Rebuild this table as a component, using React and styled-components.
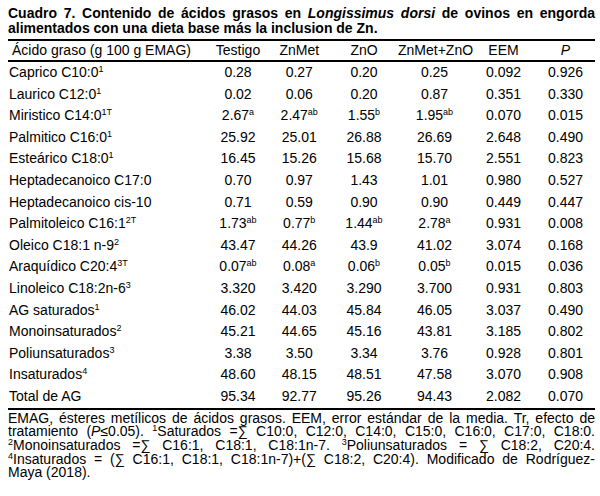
import React from 'react';
import styled, { createGlobalStyle } from 'styled-components';

const GlobalStyle = createGlobalStyle`
  body {
    margin: 0;
    background: #ffffff;
    color: #000000;
    font-family: "Liberation Sans", Arial, sans-serif;
  }
`;

const Page = styled.div`
  width: 587px;
  padding: 6px 5px 0 8px;
`;

const Title = styled.div`
  font-size: 14px;
  font-weight: bold;
  line-height: 15px;
`;

const Line = styled.div`
  text-align: ${(p) => (p.$last ? 'left' : 'justify')};
  text-align-last: ${(p) => (p.$last ? 'left' : 'justify')};
`;

const Table = styled.div`
  margin-top: 3px;
  border-top: 2px solid #000;
  border-bottom: 2px solid #000;
  font-size: 14px;
`;

const cols = '199.5px 61px 61.5px 68px 73px 65px 59px';

const HeadRow = styled.div`
  display: grid;
  grid-template-columns: ${cols};
  height: 19px;
  line-height: 19px;
  border-bottom: 2px solid #000;
`;

const Row = styled.div`
  display: grid;
  grid-template-columns: ${cols};
  height: 21.6px;
  line-height: 21.6px;
`;

const Label = styled.div`
  padding-left: ${(p) => (p.$head ? '4px' : '1px')};
  white-space: nowrap;
`;

const Cell = styled.div`
  text-align: center;
  white-space: nowrap;
  font-style: ${(p) => (p.$italic ? 'italic' : 'normal')};
`;

const Sup = styled.sup`
  font-size: 9px;
  line-height: 0;
  vertical-align: 5px;
`;

const Notes = styled.div`
  margin-top: 2px;
  font-size: 14px;
  line-height: 13.7px;
`;

const rows = [
  ['Caprico C10:0', '1', ['0.28'], ['0.27'], ['0.20'], ['0.25'], '0.092', '0.926'],
  ['Laurico C12:0', '1', ['0.02'], ['0.06'], ['0.20'], ['0.87'], '0.351', '0.330'],
  ['Miristico C14:0', '1T', ['2.67', 'a'], ['2.47', 'ab'], ['1.55', 'b'], ['1.95', 'ab'], '0.070', '0.015'],
  ['Palmitico C16:0', '1', ['25.92'], ['25.01'], ['26.88'], ['26.69'], '2.648', '0.490'],
  ['Esteárico C18:0', '1', ['16.45'], ['15.26'], ['15.68'], ['15.70'], '2.551', '0.823'],
  ['Heptadecanoico C17:0', '', ['0.70'], ['0.97'], ['1.43'], ['1.01'], '0.980', '0.527'],
  ['Heptadecanoico cis-10', '', ['0.71'], ['0.59'], ['0.90'], ['0.90'], '0.449', '0.447'],
  ['Palmitoleico C16:1', '2T', ['1.73', 'ab'], ['0.77', 'b'], ['1.44', 'ab'], ['2.78', 'a'], '0.931', '0.008'],
  ['Oleico C18:1 n-9', '2', ['43.47'], ['44.26'], ['43.9'], ['41.02'], '3.074', '0.168'],
  ['Araquídico C20:4', '3T', ['0.07', 'ab'], ['0.08', 'a'], ['0.06', 'b'], ['0.05', 'b'], '0.015', '0.036'],
  ['Linoleico C18:2n-6', '3', ['3.320'], ['3.420'], ['3.290'], ['3.700'], '0.931', '0.803'],
  ['AG saturados', '1', ['46.02'], ['44.03'], ['45.84'], ['46.05'], '3.037', '0.490'],
  ['Monoinsaturados', '2', ['45.21'], ['44.65'], ['45.16'], ['43.81'], '3.185', '0.802'],
  ['Poliunsaturados', '3', ['3.38'], ['3.50'], ['3.34'], ['3.76'], '0.928', '0.801'],
  ['Insaturados', '4', ['48.60'], ['48.15'], ['48.51'], ['47.58'], '3.070', '0.908'],
  ['Total de AG', '', ['95.34'], ['92.77'], ['95.26'], ['94.43'], '2.082', '0.070'],
];

const Value = ({ v }) => (
  <Cell>
    {v[0]}
    {v[1] && <Sup>{v[1]}</Sup>}
  </Cell>
);

export default function App() {
  return (
    <>
      <GlobalStyle />
      <Page>
        <Title>
          <Line>
            Cuadro 7. Contenido de ácidos grasos en <i>Longissimus dorsi</i> de ovinos en engorda
          </Line>
          <Line $last>alimentados con una dieta base más la inclusion de Zn.</Line>
        </Title>
        <Table>
          <HeadRow>
            <Label $head>Ácido graso (g 100 g EMAG)</Label>
            <Cell>Testigo</Cell>
            <Cell>ZnMet</Cell>
            <Cell>ZnO</Cell>
            <Cell>ZnMet+ZnO</Cell>
            <Cell>EEM</Cell>
            <Cell $italic>P</Cell>
          </HeadRow>
          {rows.map((r) => (
            <Row key={r[0]}>
              <Label>
                {r[0]}
                {r[1] && <Sup>{r[1]}</Sup>}
              </Label>
              <Value v={r[2]} />
              <Value v={r[3]} />
              <Value v={r[4]} />
              <Value v={r[5]} />
              <Cell>{r[6]}</Cell>
              <Cell>{r[7]}</Cell>
            </Row>
          ))}
        </Table>
        <Notes>
          <Line>EMAG, ésteres metílicos de ácidos grasos. EEM, error estándar de la media. Tr, efecto de</Line>
          <Line>
            tratamiento (<i>P</i>≤0.05). <Sup>1</Sup>Saturados =∑ C10:0, C12:0, C14:0, C15:0, C16:0, C17:0, C18:0.
          </Line>
          <Line>
            <Sup>2</Sup>Monoinsaturados =∑ C16:1, C18:1, C18:1n-7. <Sup>3</Sup>Poliunsaturados = ∑ C18:2, C20:4.
          </Line>
          <Line>
            <Sup>4</Sup>Insaturados = (∑ C16:1, C18:1, C18:1n-7)+(∑ C18:2, C20:4). Modificado de Rodríguez-
          </Line>
          <Line $last>Maya (2018).</Line>
        </Notes>
      </Page>
    </>
  );
}
